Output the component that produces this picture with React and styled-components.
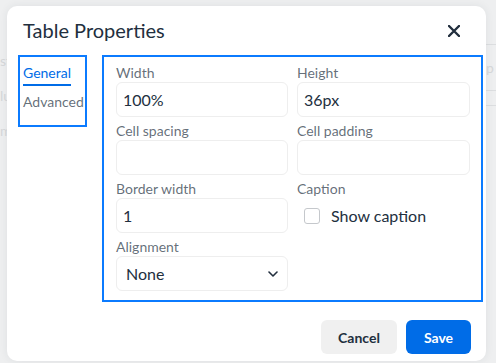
import React from "react";
import styled, { createGlobalStyle } from "styled-components";

const GlobalStyle = createGlobalStyle`
  html, body {
    margin: 0;
    padding: 0;
    background: #eeeff0;
    font-family: Lato, "Noto Sans", sans-serif;
  }
  * {
    box-sizing: border-box;
  }
`;

const Page = styled.div`
  position: relative;
  width: 496px;
  height: 363px;
  overflow: hidden;
  background: #eeeff0;
`;

const Backdrop = styled.div`
  display: flex;
  justify-content: space-between;
  height: 100%;
  padding-top: 14px;
  color: #d6d8da;
  font-size: 14px;
`;

const BackColumn = styled.div`
  display: flex;
  flex-direction: column;
  gap: ${(p) => p.gap || 18}px;
  width: ${(p) => p.width}px;
  padding-top: ${(p) => p.top || 0}px;
`;

const BackLine = styled.div`
  height: 1px;
  background: #dcdee0;
`;

const Dialog = styled.div`
  position: absolute;
  left: 7px;
  top: 6px;
  width: 479px;
  height: 355px;
  display: flex;
  flex-direction: column;
  background: #fff;
  border-radius: 10px;
  box-shadow: 0 0 8px rgba(34, 47, 62, 0.08);
  color: #222f3e;
`;

const Header = styled.div`
  display: flex;
  align-items: center;
  justify-content: space-between;
  height: 49px;
  padding: 0 20px 0 16px;
`;

const Title = styled.h1`
  margin: 0;
  font-size: 20px;
  font-weight: 400;
  color: #222f3e;
  line-height: 27px;
`;

const CloseButton = styled.button`
  display: flex;
  align-items: center;
  justify-content: center;
  width: 24px;
  height: 24px;
  padding: 0;
  border: none;
  background: none;
  color: #222f3e;
  cursor: pointer;
`;

const Body = styled.div`
  display: flex;
  align-items: flex-start;
  gap: 15px;
  padding: 0 3px 0 11px;
`;

const Tabs = styled.div`
  display: flex;
  flex-direction: column;
  width: 69px;
  height: 72px;
  padding: 6px 0 0 3px;
  border: 2px solid #0b7bff;
`;

const Tab = styled.div`
  align-self: flex-start;
  font-size: 14px;
  line-height: 19px;
  padding-bottom: ${(p) => (p.active ? "2px" : "0")};
  margin-bottom: ${(p) => (p.active ? "6px" : "0")};
  color: ${(p) => (p.active ? "#006ce7" : "rgba(34, 47, 62, 0.7)")};
  border-bottom: ${(p) => (p.active ? "2px solid #006ce7" : "none")};
`;

const Panel = styled.div`
  flex: 1;
  display: grid;
  grid-template-columns: 172px 173px;
  column-gap: 9px;
  row-gap: 4px;
  padding: 6px 11px 9px 12px;
  border: 2px solid #0b7bff;
`;

const Field = styled.div`
  display: flex;
  flex-direction: column;
`;

const Label = styled.label`
  font-size: 14px;
  line-height: 19px;
  color: rgba(34, 47, 62, 0.7);
`;

const Input = styled.input`
  height: 35px;
  width: 100%;
  padding: 0 6px;
  border: 1px solid #eeeeee;
  border-radius: 6px;
  font-family: inherit;
  font-size: 16px;
  color: #222f3e;
  outline: none;
`;

const Select = styled.div`
  display: flex;
  align-items: center;
  justify-content: space-between;
  height: 35px;
  padding: 0 9px 0 9px;
  border: 1px solid #eeeeee;
  border-radius: 6px;
  font-size: 16px;
  color: #222f3e;
`;

const CheckRow = styled.label`
  display: flex;
  align-items: center;
  gap: 11px;
  height: 35px;
  padding-left: 7px;
  font-size: 16px;
  color: #222f3e;
`;

const Box = styled.span`
  width: 16px;
  height: 16px;
  border: 1px solid #c5c8cc;
  border-radius: 3px;
  background: #fff;
`;

const Footer = styled.div`
  display: flex;
  justify-content: flex-end;
  gap: 9px;
  padding: 18px 15px 0 0;
`;

const Button = styled.button`
  height: 34px;
  width: ${(p) => p.width}px;
  padding: 0;
  border: none;
  border-radius: 6px;
  font-family: inherit;
  font-size: 14px;
  font-weight: 700;
  background: ${(p) => (p.primary ? "#006ce7" : "#f0f0f0")};
  color: ${(p) => (p.primary ? "#fff" : "#222f3e")};
  cursor: pointer;
`;

function Chevron() {
  return (
    <svg width="10" height="6" viewBox="0 0 10 6">
      <path d="M1 1l4 4 4-4" fill="none" stroke="#222f3e" strokeWidth="1.6" strokeLinecap="round" strokeLinejoin="round" />
    </svg>
  );
}

function CloseIcon() {
  return (
    <svg width="12" height="12" viewBox="0 0 12 12">
      <path d="M1 1l10 10M11 1L1 11" stroke="#222f3e" strokeWidth="2.4" strokeLinecap="round" />
    </svg>
  );
}

export default function App() {
  return (
    <>
      <GlobalStyle />
      <Page>
        <Backdrop>
          <BackColumn width={20} top={38}>
            <span>st</span>
            <span>lu</span>
            <span>m</span>
          </BackColumn>
          <BackColumn width={10} top={30} gap={14}>
            <BackLine />
            <span>p</span>
            <BackLine />
            <BackLine />
          </BackColumn>
        </Backdrop>

        <Dialog>
          <Header>
            <Title>Table Properties</Title>
            <CloseButton aria-label="Close">
              <CloseIcon />
            </CloseButton>
          </Header>

          <Body>
            <Tabs>
              <Tab active>General</Tab>
              <Tab>Advanced</Tab>
            </Tabs>

            <Panel>
              <Field>
                <Label>Width</Label>
                <Input defaultValue="100%" />
              </Field>
              <Field>
                <Label>Height</Label>
                <Input defaultValue="36px" />
              </Field>
              <Field>
                <Label>Cell spacing</Label>
                <Input />
              </Field>
              <Field>
                <Label>Cell padding</Label>
                <Input />
              </Field>
              <Field>
                <Label>Border width</Label>
                <Input defaultValue="1" />
              </Field>
              <Field>
                <Label>Caption</Label>
                <CheckRow>
                  <Box />
                  Show caption
                </CheckRow>
              </Field>
              <Field>
                <Label>Alignment</Label>
                <Select>
                  None
                  <Chevron />
                </Select>
              </Field>
            </Panel>
          </Body>

          <Footer>
            <Button width={76}>Cancel</Button>
            <Button primary width={65}>Save</Button>
          </Footer>
        </Dialog>
      </Page>
    </>
  );
}
